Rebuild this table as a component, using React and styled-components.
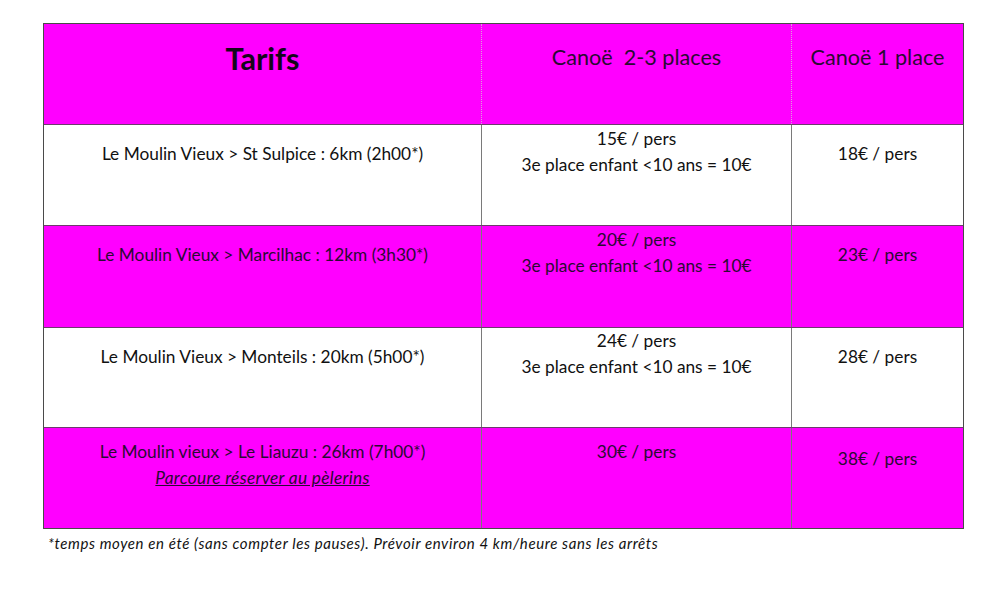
import React from 'react';
import styled, { createGlobalStyle } from 'styled-components';

const GlobalStyle = createGlobalStyle`
  html, body {
    margin: 0;
    padding: 0;
    background: #ffffff;
  }
  body {
    font-family: Lato, "Open Sans", "Liberation Sans", sans-serif;
    color: #111;
  }
`;

const Page = styled.div`
  width: 1000px;
  height: 595px;
  padding: 23px 0 0 43px;
  box-sizing: border-box;
`;

const Table = styled.div`
  width: 921px;
  border: 1px solid #4a4a4a;
  box-sizing: border-box;
`;

const Row = styled.div`
  display: grid;
  grid-template-columns: 437px 310px 1fr;
  box-sizing: border-box;
  height: ${(p) => p.h}px;
  background: ${(p) => (p.pink ? '#ff00ff' : '#ffffff')};
  color: ${(p) => (p.pink ? '#2b0a33' : '#111111')};
  border-top: ${(p) => (p.first ? 'none' : '1px solid #6e3a6e')};
`;

const Cell = styled.div`
  padding-top: ${(p) => p.pad}px;
  text-align: center;
  font-size: 17.3px;
  line-height: 26px;
  border-left: ${(p) => (p.first ? 'none' : p.dotted ? '1px dotted #d9a0d9' : '1px solid #7a7a7a')};
  white-space: pre;
`;

const Title = styled.div`
  font-size: 30.6px;
  font-weight: 700;
  line-height: 36px;
  color: #14051a;
`;

const HeadLabel = styled.div`
  font-size: 21.6px;
  line-height: 26px;
`;

const Note = styled.div`
  font-style: italic;
  text-decoration: underline;
  letter-spacing: 0.3px;
`;

const Footnote = styled.p`
  margin: 5px 0 0 5px;
  font-size: 15px;
  line-height: 18px;
  letter-spacing: 0.6px;
  font-style: italic;
  color: #111;
`;

const rows = [
  {
    route: ['Le Moulin Vieux > St Sulpice : 6km (2h00*)'],
    duo: ['15€ / pers', '3e place enfant <10 ans = 10€'],
    solo: '18€ / pers',
    pads: [16, 1, 16],
    h: 101,
  },
  {
    route: ['Le Moulin Vieux > Marcilhac : 12km (3h30*)'],
    duo: ['20€ / pers', '3e place enfant <10 ans = 10€'],
    solo: '23€ / pers',
    pads: [16, 1, 16],
    pink: true,
    h: 102,
  },
  {
    route: ['Le Moulin Vieux > Monteils : 20km (5h00*)'],
    duo: ['24€ / pers', '3e place enfant <10 ans = 10€'],
    solo: '28€ / pers',
    pads: [16, 0, 16],
    h: 100,
  },
  {
    route: ['Le Moulin vieux > Le Liauzu : 26km (7h00*)'],
    note: 'Parcoure réserver au pèlerins',
    duo: ['30€ / pers'],
    solo: '38€ / pers',
    pads: [11, 11, 18],
    pink: true,
    h: 101,
  },
];

export default function App() {
  return (
    <Page>
      <GlobalStyle />
      <Table>
        <Row pink first h={100}>
          <Cell first pad={17}>
            <Title>Tarifs</Title>
          </Cell>
          <Cell dotted pad={20}>
            <HeadLabel>Canoë  2-3 places</HeadLabel>
          </Cell>
          <Cell dotted pad={20}>
            <HeadLabel>Canoë 1 place</HeadLabel>
          </Cell>
        </Row>
        {rows.map((r) => (
          <Row key={r.solo} pink={r.pink} h={r.h}>
            <Cell first pad={r.pads[0]}>
              {r.route.map((l) => (
                <div key={l}>{l}</div>
              ))}
              {r.note && <Note>{r.note}</Note>}
            </Cell>
            <Cell pad={r.pads[1]}>
              {r.duo.map((l) => (
                <div key={l}>{l}</div>
              ))}
            </Cell>
            <Cell pad={r.pads[2]}>{r.solo}</Cell>
          </Row>
        ))}
      </Table>
      <Footnote>
        *temps moyen en été (sans compter les pauses). Prévoir environ 4 km/heure sans les arrêts
      </Footnote>
    </Page>
  );
}
